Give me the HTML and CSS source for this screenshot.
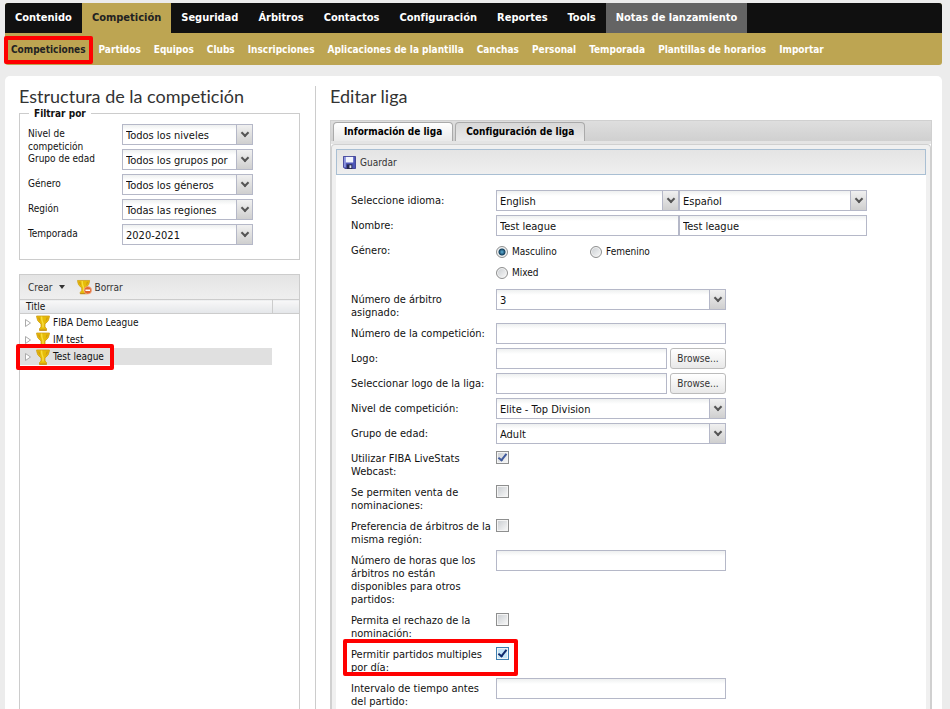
FILE: index.html
```html
<!DOCTYPE html>
<html lang="es">
<head>
    <meta charset="UTF-8">
    <meta name="viewport" content="width=device-width, initial-scale=1.0">
    <title>Editar liga</title>
    <link rel="stylesheet" href="styles.css">
</head>
<body>
    <svg class="sprite" aria-hidden="true">
        <symbol id="trophy" viewBox="0 0 14 16">
            <path d="M.5 1h13q0 5-4.500 8v3l1.500 1.500v2h-7v-2L5 12V9Q.5 6 .5 1z" fill="#e6bc08" stroke="#cf9d1c" stroke-width=".8"/>
            <path d="M2 2.500h1.500l1 4Q2.500 5 2 2.500zM12 2.500h-1.500l-1 4Q11.500 5 12 2.500z" fill="#d19a10"/>
            <path d="M5.500 1.500q0 4 1.500 7v4" fill="none" stroke="#f8dc3c" stroke-width="1.500"/>
            <path d="M3.500 15h7" stroke="#c08a1a"/>
        </symbol>
    </svg>

    <header class="header">
        <nav class="main-nav">
            <a href="#">Contenido</a>
            <a href="#" class="active">Competición</a>
            <a href="#">Seguridad</a>
            <a href="#">Árbitros</a>
            <a href="#">Contactos</a>
            <a href="#">Configuración</a>
            <a href="#">Reportes</a>
            <a href="#">Tools</a>
            <a href="#" class="notes">Notas de lanzamiento</a>
        </nav>
        <nav class="sub-nav">
            <a href="#" class="active marked">Competiciones</a>
            <a href="#">Partidos</a>
            <a href="#">Equipos</a>
            <a href="#">Clubs</a>
            <a href="#">Inscripciones</a>
            <a href="#">Aplicaciones de la plantilla</a>
            <a href="#">Canchas</a>
            <a href="#">Personal</a>
            <a href="#">Temporada</a>
            <a href="#">Plantillas de horarios</a>
            <a href="#">Importar</a>
        </nav>
    </header>

    <main class="content">
        <aside class="sidebar">
            <h1>Estructura de la competición</h1>
            <fieldset class="filters">
                <legend>Filtrar por</legend>
                <div class="filter-row">
                    <label for="f-level">Nivel de competición</label>
                    <span class="select"><select id="f-level"><option>Todos los niveles</option></select></span>
                </div>
                <div class="filter-row">
                    <label for="f-age">Grupo de edad</label>
                    <span class="select"><select id="f-age"><option>Todos los grupos por</option></select></span>
                </div>
                <div class="filter-row">
                    <label for="f-gender">Género</label>
                    <span class="select"><select id="f-gender"><option>Todos los géneros</option></select></span>
                </div>
                <div class="filter-row">
                    <label for="f-region">Región</label>
                    <span class="select"><select id="f-region"><option>Todas las regiones</option></select></span>
                </div>
                <div class="filter-row">
                    <label for="f-season">Temporada</label>
                    <span class="select"><select id="f-season"><option>2020-2021</option></select></span>
                </div>
            </fieldset>

            <section class="tree">
                <div class="tree-bar">
                    <button type="button">Crear <span class="caret"></span></button>
                    <button type="button">
                        <svg class="delete-icon" viewBox="0 0 16 16">
                            <use href="#trophy" width="14" height="16"/>
                            <circle cx="11.500" cy="11.500" r="4" fill="#e2662c" stroke="#f3b08c" stroke-width=".8"/>
                            <path d="M9 11.500h5" stroke="#fff" stroke-width="1.600"/>
                        </svg>
                        Borrar
                    </button>
                </div>
                <table>
                    <thead>
                        <tr><th>Title</th><th class="spare"></th></tr>
                    </thead>
                    <tbody>
                        <tr><td><div class="node"><svg class="expand" viewBox="0 0 6 8"><path d="M.5.5v7l5-3.500z"/></svg><svg class="cup"><use href="#trophy"/></svg>FIBA Demo League</div></td><td></td></tr>
                        <tr><td><div class="node"><svg class="expand" viewBox="0 0 6 8"><path d="M.5.5v7l5-3.500z"/></svg><svg class="cup"><use href="#trophy"/></svg>IM test</div></td><td></td></tr>
                        <tr class="selected"><td><div class="node marked"><svg class="expand" viewBox="0 0 6 8"><path d="M.5.5v7l5-3.500z"/></svg><svg class="cup"><use href="#trophy"/></svg>Test league</div></td><td></td></tr>
                    </tbody>
                </table>
            </section>
        </aside>

        <section class="editor">
            <h1>Editar liga</h1>
            <div class="tab-panel">
                <div class="tabs">
                    <button type="button" class="tab current">Información de liga</button>
                    <button type="button" class="tab">Configuración de liga</button>
                </div>
                <div class="tab-body">
                    <div class="toolbar">
                        <button type="button">
                            <svg class="save-icon" viewBox="0 0 14 14">
                                <path d="M.5.5h13v13H2l-1.500-1.500z" fill="#5058b8" stroke="#3c3f94"/>
                                <path d="M1 1h2v11H1z" fill="#8d96e0"/>
                                <path d="M3 1h8v6H3z" fill="#f2f5fd"/>
                                <path d="M4 9h6v5H4z" fill="#26294f"/>
                                <path d="M7 10h2v3H7z" fill="#dde2f0"/>
                            </svg>
                            Guardar
                        </button>
                    </div>
                    <form class="form">
                        <div class="row">
                            <label for="lang1">Seleccione idioma:</label>
                            <div class="pair">
                                <span class="select"><select id="lang1"><option>English</option></select></span>
                                <span class="select"><select aria-label="Segundo idioma"><option>Español</option></select></span>
                            </div>
                        </div>
                        <div class="row">
                            <label for="name1">Nombre:</label>
                            <div class="pair">
                                <input id="name1" type="text" value="Test league">
                                <input type="text" value="Test league" aria-label="Nombre en el segundo idioma">
                            </div>
                        </div>
                        <div class="row">
                            <span class="label">Género:</span>
                            <div class="radios">
                                <label><input type="radio" name="gender" checked>Masculino</label>
                                <label><input type="radio" name="gender">Femenino</label>
                                <label><input type="radio" name="gender">Mixed</label>
                            </div>
                        </div>
                        <div class="row">
                            <label for="refs">Número de árbitro asignado:</label>
                            <span class="select"><select id="refs"><option>3</option></select></span>
                        </div>
                        <div class="row">
                            <label for="number">Número de la competición:</label>
                            <input id="number" type="text">
                        </div>
                        <div class="row">
                            <label for="logo">Logo:</label>
                            <div class="file">
                                <input id="logo" type="text">
                                <button type="button">Browse...</button>
                            </div>
                        </div>
                        <div class="row">
                            <label for="league-logo">Seleccionar logo de la liga:</label>
                            <div class="file">
                                <input id="league-logo" type="text">
                                <button type="button">Browse...</button>
                            </div>
                        </div>
                        <div class="row">
                            <label for="level">Nivel de competición:</label>
                            <span class="select"><select id="level"><option>Elite - Top Division</option></select></span>
                        </div>
                        <div class="row">
                            <label for="age">Grupo de edad:</label>
                            <span class="select"><select id="age"><option>Adult</option></select></span>
                        </div>
                        <div class="row">
                            <label for="webcast">Utilizar FIBA LiveStats Webcast:</label>
                            <input id="webcast" type="checkbox" checked>
                        </div>
                        <div class="row">
                            <label for="sale">Se permiten venta de nominaciones:</label>
                            <input id="sale" type="checkbox">
                        </div>
                        <div class="row">
                            <label for="same-region">Preferencia de árbitros de la misma región:</label>
                            <input id="same-region" type="checkbox">
                        </div>
                        <div class="row">
                            <label for="hours">Número de horas que los árbitros no están disponibles para otros partidos:</label>
                            <input id="hours" type="text">
                        </div>
                        <div class="row">
                            <label for="reject">Permita el rechazo de la nominación:</label>
                            <input id="reject" type="checkbox">
                        </div>
                        <div class="row marked">
                            <label for="multiple">Permitir partidos multiples por día:</label>
                            <input id="multiple" class="hot" type="checkbox" checked>
                        </div>
                        <div class="row">
                            <label for="interval">Intervalo de tiempo antes del partido:</label>
                            <input id="interval" type="text">
                        </div>
                    </form>
                </div>
            </div>
        </section>
    </main>
</body>
</html>
```
FILE: styles.css
```css
*, *::before, *::after {
    box-sizing: border-box;
}

body {
    margin: 0;
    padding: 3px 8px 0 5px;
    min-height: 100vh;
    display: flex;
    flex-direction: column;
    background-color: #ececec;
    color: #111;
    font-family: 'DejaVu Sans Condensed', 'DejaVu Sans', sans-serif;
    font-size: 11px;
    line-height: 13px;
}

button, input, select {
    font: inherit;
    color: inherit;
    margin: 0;
}

button {
    cursor: pointer;
}

.sprite {
    display: none;
}

h1 {
    margin: 0;
    font-family: Lato, sans-serif;
    font-size: 18px;
    line-height: 20px;
    font-weight: normal;
    font-variant-ligatures: none;
    color: #333;
}

/* Navigation */
.header {
    border-radius: 3px;
    background-color: #bda552;
}

.main-nav, .sub-nav {
    display: flex;
    font-weight: bold;
}

.main-nav {
    background-color: #101010;
    border-radius: 3px 3px 0 0;
    font-size: 11px;
    line-height: 30px;
}

.sub-nav {
    padding: 9px 0 7px 6px;
    gap: 13px;
    font-size: 10px;
    line-height: 16px;
}

.header a {
    color: #fff;
    text-decoration: none;
    white-space: nowrap;
}

.main-nav a {
    padding: 0 10px;
}

.header a.active {
    color: #222;
}

.main-nav a.active {
    background-color: #bda552;
}

.main-nav a.notes {
    background-color: #646464;
}

/* Red frames over the marked items */
.marked {
    position: relative;
}

.marked::after {
    content: "";
    position: absolute;
    inset: -6px -7px;
    border: 4px solid #f00;
    border-radius: 2px;
    pointer-events: none;
}

/* Page body */
.content {
    flex: 1;
    display: flex;
    margin-top: 11px;
    padding: 10px 10px 0 14px;
    background-color: #fff;
    border-radius: 5px 5px 0 0;
}

.sidebar {
    display: flex;
    flex-direction: column;
    flex: 0 0 297px;
    padding-right: 15px;
    border-right: 1px solid #ccc;
}

.filters {
    margin: 1px 0 0;
    padding: 4px 8px 10px;
    border: 1px solid #ccc;
}

.filters legend {
    margin-left: 1px;
    padding: 0 5px;
    font-size: 10px;
    font-weight: bold;
}

.filter-row {
    display: flex;
    height: 25px;
}

.filter-row label {
    width: 94px;
    padding: 3px 24px 0 0;
    font-size: 10px;
}

.filter-row .select {
    width: 131px;
}

/* Fields */
.select {
    position: relative;
    display: block;
    height: 21px;
}

.select::before {
    content: "";
    position: absolute;
    top: 0;
    right: 0;
    width: 17px;
    height: 21px;
    border: 1px solid #b5b8c8;
    background: linear-gradient(#f0f0f0, #cfcfcf);
    pointer-events: none;
}

.select::after {
    content: "";
    position: absolute;
    top: 6px;
    right: 5px;
    width: 6px;
    height: 6px;
    border: solid #555;
    border-width: 0 2px 2px 0;
    transform: rotate(45deg);
    pointer-events: none;
}

select, input[type="text"] {
    appearance: none;
    display: block;
    width: 100%;
    height: 21px;
    padding: 1px 3px 0;
    border: 1px solid #b5b8c8;
    border-radius: 0;
    background: linear-gradient(#eef0f0, #fff 5px);
    outline: none;
}

.select select {
    padding-right: 18px;
}

input[type="checkbox"] {
    appearance: none;
    width: 13px;
    height: 13px;
    margin-top: 3px;
    border: 1px solid #8e8f8f;
    background: linear-gradient(135deg, #c8ccd0, #fafafa);
    box-shadow: inset 0 0 0 1px #f4f4f4;
}

input[type="checkbox"]:checked::after {
    content: "";
    display: block;
    width: 5px;
    height: 9px;
    margin: 0 0 0 3px;
    border: solid #405a9c;
    border-width: 0 2px 2px 0;
    transform: rotate(38deg);
}

input[type="checkbox"].hot {
    border-color: #3c7fb1;
    background: #c5e6f8;
}

input[type="checkbox"].hot:checked::after {
    border-color: #102a6c;
}

input[type="radio"] {
    appearance: none;
    width: 12px;
    height: 12px;
    margin: 0 4px 0 0;
    border: 1px solid #8e8f8f;
    border-radius: 50%;
    background: linear-gradient(135deg, #c8ccd0, #fafafa);
    box-shadow: inset 0 0 0 1px #f4f4f4;
}

input[type="radio"]:checked {
    background: radial-gradient(circle, #5fb4dc 0, #14415f 3px, #e4e8ea 4px);
}

/* Tree */
.tree {
    flex: 1;
    margin-top: 14px;
    border: 1px solid #ccc;
    border-bottom: none;
}

.tree-bar {
    display: flex;
    gap: 12px;
    height: 24px;
    padding: 0 8px;
    background: linear-gradient(#e4e4e4, #efefef);
}

.tree-bar button, .toolbar button {
    display: flex;
    align-items: center;
    gap: 3px;
    padding: 0;
    border: none;
    background: none;
    color: #333;
    font-size: 10px;
}

.caret {
    margin-left: 3px;
    border: 3px solid transparent;
    border-top: 4px solid #333;
    border-bottom: none;
}

.delete-icon {
    width: 15px;
    height: 16px;
}

.tree table {
    width: 100%;
    border-collapse: collapse;
    table-layout: fixed;
    font-size: 10px;
}

.tree th {
    height: 14px;
    padding: 0 6px;
    border: solid #ccc;
    border-width: 1px 0;
    background: linear-gradient(#f8f8f8, #e4e6e9);
    text-align: left;
    font-weight: normal;
    line-height: 12px;
}

.tree th.spare {
    width: 27px;
    border-left-width: 1px;
}

.tree td {
    height: 17px;
    padding: 0;
}

.tree .selected td:first-child {
    background-color: #e0e0e0;
}

.node {
    display: inline-flex;
    align-items: center;
    height: 17px;
    padding-left: 5px;
    vertical-align: top;
}

.node.marked::after {
    inset: -4px -10px -5px -4px;
}

.expand {
    width: 6px;
    height: 8px;
    margin-right: 5px;
    fill: #fff;
    stroke: #aaa;
}

.cup {
    width: 14px;
    height: 16px;
    margin-right: 3px;
}

/* Editor */
.editor {
    flex: 1;
    display: flex;
    flex-direction: column;
    padding-left: 14px;
    min-width: 0;
}

.tab-panel {
    flex: 1;
    display: flex;
    flex-direction: column;
    margin-top: 14px;
    border: 1px solid #d0d0d0;
    border-bottom: none;
}

.tabs {
    display: flex;
    gap: 2px;
    height: 23px;
    padding: 1px 2px 0;
    border-bottom: 3px solid #e4e4e4;
    background: linear-gradient(#dedede, #d0d0d0);
}

.tab {
    padding: 0 10px 1px;
    border: 1px solid #aaa;
    border-bottom: none;
    border-radius: 4px 4px 0 0;
    background: linear-gradient(#d8d8d8, #eaeaea);
    color: #000;
    font-size: 10px;
    font-weight: bold;
}

.tab.current {
    background: linear-gradient(#fff, #eaeaea);
}

.tab-body {
    flex: 1;
    padding: 4px 4px 0;
    border: 1px solid #d0d0d0;
    border-bottom: none;
    border-radius: 4px 4px 0 0;
    background-color: #f0f0f0;
}

.toolbar {
    display: flex;
    height: 26px;
    padding: 0 6px;
    border: 1px solid #a9bfd3;
    background: linear-gradient(#e4e4e4, #efefef);
}

.toolbar button {
    gap: 4px;
}

.save-icon {
    width: 13px;
    height: 13px;
}

.form {
    display: flex;
    flex-direction: column;
    gap: 4px;
    min-height: 100%;
    padding: 15px 15px 0;
    background-color: #fff;
}

.row {
    display: flex;
    align-items: flex-start;
    align-self: flex-start;
}

.row > label, .row > .label {
    flex: 0 0 145px;
    padding: 4px 4px 0 0;
}

.row > .select, .row > input[type="text"] {
    width: 230px;
}

.pair {
    display: grid;
    grid-template-columns: 183px 188px;
}

.radios {
    display: grid;
    grid-template-columns: 94px 94px;
    gap: 8px 0;
    padding: 5px 0 6px;
    font-size: 10px;
}

.radios label {
    display: flex;
    align-items: center;
}

.file {
    display: grid;
    grid-template-columns: 171px 56px;
    gap: 3px;
}

.file button {
    height: 21px;
    padding: 0;
    border: 1px solid #bbb;
    border-radius: 3px;
    background: linear-gradient(#fff, #e8e8e8);
    color: #333;
    font-size: 10px;
}

.row.marked::after {
    inset: -5px -9px -2px -8px;
}
```
